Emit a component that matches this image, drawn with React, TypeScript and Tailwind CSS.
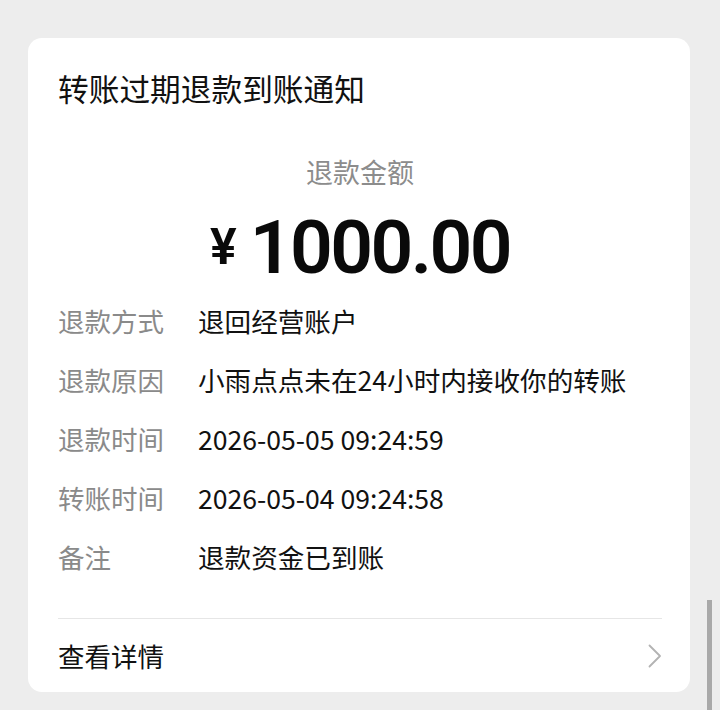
const ROWS = [
  { label: "退款方式", value: "退回经营账户" },
  { label: "退款原因", value: "小雨点点未在24小时内接收你的转账" },
  { label: "退款时间", value: "2026-05-05 09:24:59" },
  { label: "转账时间", value: "2026-05-04 09:24:58" },
  { label: "备注", value: "退款资金已到账" },
];

export default function App() {
  return (
    <div
      className="relative h-[710px] overflow-hidden bg-[#ededed] pt-[38px] pl-[28px] pr-[30px]"
      style={{ fontFamily: '"Noto Sans CJK SC", "Noto Sans", sans-serif' }}
    >
      <div className="rounded-[14px] bg-white pl-[30px] pr-[28px] pt-[28px]">
        <h1 className="text-[30.7px] leading-[44px] font-normal text-[#111]">转账过期退款到账通知</h1>

        <div className="mt-[42px] flex flex-col items-center">
          <p className="text-[27px] leading-[40px] text-[#8c8c8c]">退款金额</p>
          <div className="mt-[15px] flex items-center text-[#0a0a0a]" style={{ fontFamily: "Roboto, sans-serif" }}>
            <span className="text-[50px] leading-[80px] font-semibold mr-[13px]">¥</span>
            <span className="text-[75px] leading-[80px] font-semibold tracking-[-2.6px]">1000.00</span>
          </div>
        </div>

        <div className="mt-[4px] flex flex-col">
          {ROWS.map((row) => (
            <div key={row.label} className="flex h-[59px] items-center">
              <span className="w-[140px] shrink-0 text-[26.5px] text-[#8a8a8a]">{row.label}</span>
              <span className="text-[26.6px] text-[#111]">{row.value}</span>
            </div>
          ))}
        </div>

        <div className="mt-[32px] flex h-[74px] items-center justify-between border-t border-[#e6e6e6]">
          <span className="text-[26.5px] text-[#111]">查看详情</span>
          <svg width="14" height="24" viewBox="0 0 14 24" fill="none">
            <polyline points="1.5,1.5 12,12 1.5,22.5" stroke="#b3b3b3" strokeWidth="1.8" strokeLinecap="round" strokeLinejoin="round" />
          </svg>
        </div>
      </div>

      <div className="absolute right-[8px] top-[600px] h-[110px] w-[5px] bg-[#a9a9a9]" />
    </div>
  );
}
